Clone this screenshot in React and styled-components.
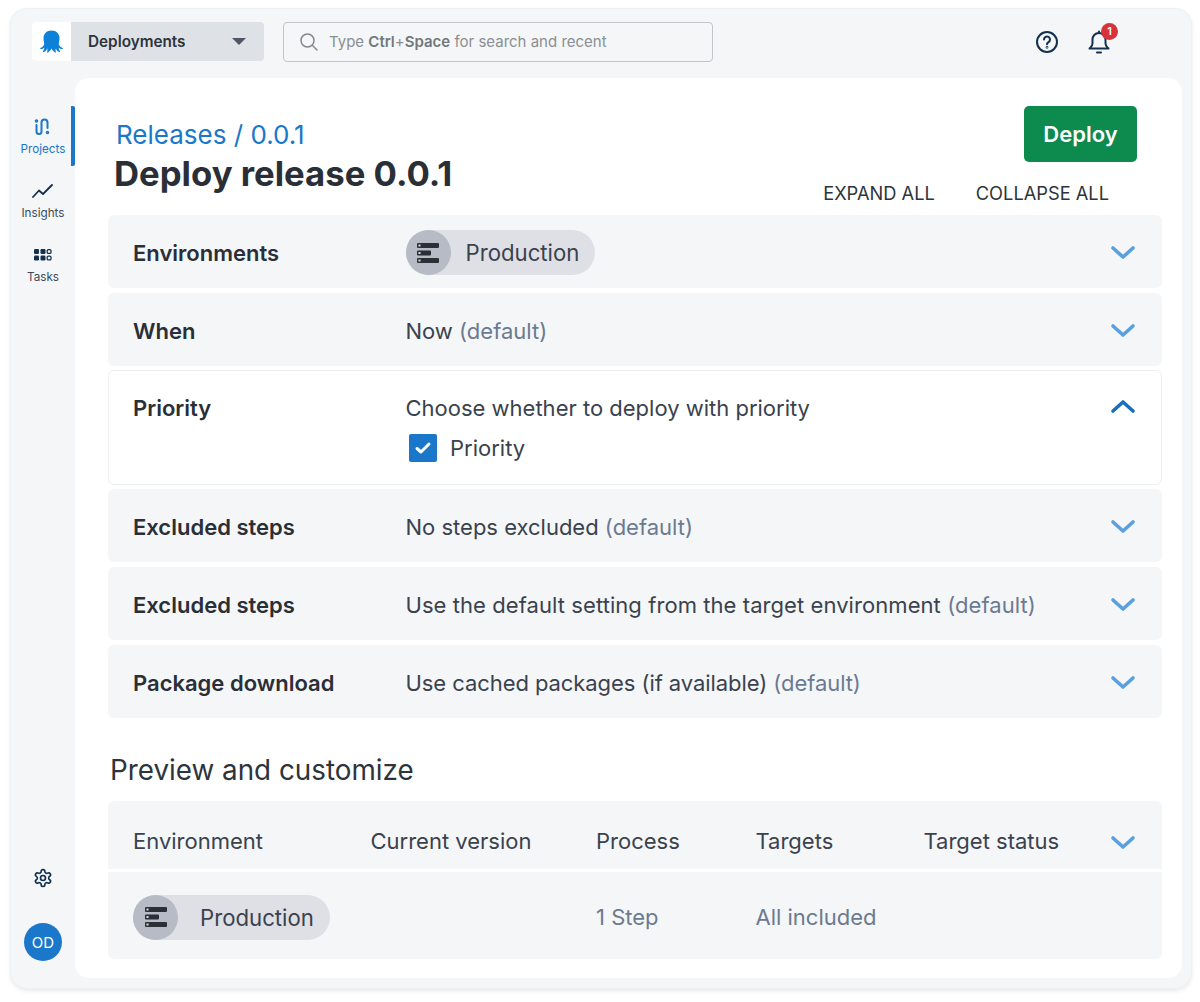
import React from "react";
import styled, { createGlobalStyle } from "styled-components";

const Global = createGlobalStyle`
  html, body { margin: 0; padding: 0; background: #ffffff; }
  body { font-family: Inter, "Liberation Sans", sans-serif; color: #2e343c; }
  * { box-sizing: border-box; }
`;

const Stage = styled.div`
  width: 1200px;
  height: 1002px;
  padding: 9px 9px 14px 11px;
`;
const Frame = styled.div`
  width: 1180px;
  height: 979px;
  background: #f4f6f8;
  border-radius: 16px;
  box-shadow: 0 0 0 1px #eef0f2, 0 2px 5px rgba(40, 50, 60, 0.14);
  display: flex;
  flex-direction: column;
  padding-bottom: 10px;
`;
const Topbar = styled.header`
  height: 69px;
  flex: none;
  display: flex;
  align-items: center;
  padding: 0 80px 4px 21px;
`;
const LogoBox = styled.div`
  width: 39px;
  height: 39px;
  background: #ffffff;
  border-radius: 4px 0 0 4px;
  display: flex;
  align-items: center;
  justify-content: center;
`;
const Selector = styled.div`
  width: 193px;
  height: 39px;
  background: #dee1e6;
  border-radius: 0 4px 4px 0;
  display: flex;
  align-items: center;
  justify-content: space-between;
  padding: 0 18px 0 17px;
  font-size: 15.3px;
  font-weight: 600;
  color: #2e343c;
`;
const Caret = styled.span`
  width: 0;
  height: 0;
  border-left: 7px solid transparent;
  border-right: 7px solid transparent;
  border-top: 7px solid #4f5668;
`;
const Search = styled.div`
  width: 430px;
  height: 40px;
  margin-left: 19px;
  border: 1px solid #c2c5c9;
  border-radius: 4px;
  display: flex;
  align-items: center;
  gap: 10px;
  padding: 0 15px;
  font-size: 15px;
  color: #8b8e92;
  b { font-weight: 600; color: #73767a; }
`;
const TopActions = styled.div`
  margin-left: auto;
  display: flex;
  align-items: center;
  gap: 28px;
`;
const IconButton = styled.span`
  position: relative;
  display: flex;
`;
const Badge = styled.span`
  position: absolute;
  top: -6px;
  left: 14px;
  width: 17px;
  height: 17px;
  border-radius: 50%;
  background: #d8333a;
  color: #fff;
  font-size: 11px;
  font-weight: 600;
  display: flex;
  align-items: center;
  justify-content: center;
`;
const Body = styled.div`
  flex: 1;
  display: flex;
  min-height: 0;
  padding-right: 9px;
`;
const Sidebar = styled.nav`
  width: 64px;
  flex: none;
  display: flex;
  flex-direction: column;
  padding-top: 28px;
`;
const NavItem = styled.div`
  height: 60px;
  margin-bottom: 4px;
  display: flex;
  flex-direction: column;
  align-items: center;
  justify-content: center;
  gap: 6px;
  padding: 2px 0 0 4px;
  font-size: 11.7px;
  color: ${(p) => (p.$active ? "#1a77ca" : "#3d4a5c")};
  border-right: 4px solid ${(p) => (p.$active ? "#1a77ca" : "transparent")};
  border-radius: 2px;
`;
const SideBottom = styled.div`
  margin-top: auto;
  display: flex;
  flex-direction: column;
  align-items: center;
  gap: 35px;
  padding-bottom: 17px;
`;
const Avatar = styled.div`
  width: 38px;
  height: 38px;
  border-radius: 50%;
  background: #1a77ca;
  color: #ffffff;
  font-size: 15px;
  display: flex;
  align-items: center;
  justify-content: center;
`;
const Main = styled.main`
  flex: 1;
  background: #ffffff;
  border-radius: 14px;
  padding: 28px 20px 19px 33px;
  display: flex;
  flex-direction: column;
`;
const Head = styled.div`
  height: 109px;
  flex: none;
  display: flex;
  justify-content: space-between;
`;
const Titles = styled.div`
  padding: 13px 0 0 8px;
`;
const Crumb = styled.div`
  font-size: 26px;
  line-height: 32px;
  color: #1a77ca;
`;
const Title = styled.h1`
  margin: 0 0 0 -2px;
  font-size: 34.7px;
  line-height: 44px;
  font-weight: 700;
  color: #2a2f37;
`;
const HeadRight = styled.div`
  display: flex;
  flex-direction: column;
  align-items: flex-end;
`;
const DeployButton = styled.button`
  width: 113px;
  height: 56px;
  margin-right: 25px;
  border: 0;
  border-radius: 5px;
  background: #0d8a4e;
  color: #ffffff;
  font: 600 22px Inter, sans-serif;
`;
const HeadLinks = styled.div`
  display: flex;
  gap: 41px;
  margin: 20px 53px 0 0;
  font-size: 18.25px;
  line-height: 22px;
  color: #2e343c;
`;
const Rows = styled.div`
  display: flex;
  flex-direction: column;
  gap: 5px;
`;
const Row = styled.section`
  height: ${(p) => p.$h || 73}px;
  flex: none;
  margin: ${(p) => (p.$open ? "-1px 0" : "0")};
  background: ${(p) => (p.$open ? "#ffffff" : "#f4f6f8")};
  border: ${(p) => (p.$open ? "1.5px solid #eceef0" : "0")};
  border-radius: 6px;
  display: grid;
  grid-template-columns: 273px 1fr 26px;
  align-items: ${(p) => (p.$open ? "start" : "center")};
  padding: ${(p) => (p.$open ? "22px 25px 0 24px" : "2px 26px 0 25px")};
`;
const RowLabel = styled.div`
  font-size: 22px;
  line-height: 30px;
  font-weight: 600;
  color: #2a2f37;
`;
const RowValue = styled.div`
  font-size: 22px;
  line-height: 30px;
  letter-spacing: ${(p) => p.$track || 0}px;
  color: #3a424d;
  margin-left: -0.5px;
`;
const Muted = styled.span`
  color: #6c7a90;
`;
const Chip = styled.div`
  display: inline-flex;
  justify-self: start;
  align-items: center;
  height: 45px;
  padding-right: 16px;
  border-radius: 23px;
  background: #dee0e5;
  font-size: 22.2px;
  color: #3a424d;
  gap: ${(p) => (p.$wide ? "22px" : "15px")};
`;
const ChipIcon = styled.span`
  width: 45px;
  height: 45px;
  border-radius: 50%;
  background: #b7bbc6;
  display: flex;
  align-items: center;
  justify-content: center;
`;
const CheckLine = styled.div`
  display: flex;
  align-items: center;
  gap: 13px;
  margin: 10px 0 0 3.5px;
`;
const CheckBox = styled.span`
  width: 28px;
  height: 28px;
  border-radius: 2px;
  background: #1a77ca;
  display: flex;
  align-items: center;
  justify-content: center;
`;
const Section = styled.h2`
  margin: 35px 0 14px 2px;
  font-size: 27.8px;
  line-height: 34px;
  font-weight: 400;
  color: #2e343c;
`;
const Table = styled.div`
  background: #f4f6f8;
  border-radius: 6px;
`;
const Cols = styled.div`
  display: grid;
  grid-template-columns: 237.5px 225.5px 159.5px 168px 1fr 26px;
  align-items: center;
  padding: ${(p) => (p.$rule ? "3px" : "12px")} 26px 0 25px;
  height: ${(p) => p.$h}px;
  font-size: 22px;
  color: ${(p) => (p.$muted ? "#6c7a90" : "#3a424d")};
  border-top: ${(p) => (p.$rule ? "3px solid #ffffff" : "0")};
`;
const ChevronSvg = styled.svg`
  margin-top: ${(p) => p.$mt || 0}px;
`;

const Chevron = ({ up, mt }) => (
  <ChevronSvg $mt={mt} width="26" height="16" viewBox="0 0 26 16" fill="none" stroke={up ? "#1a6fbd" : "#5a9fde"} strokeWidth="3.6" strokeLinecap="round" strokeLinejoin="round">
    <path d={up ? "M3 13 L13 4 L23 13" : "M3 3 L13 12 L23 3"} />
  </ChevronSvg>
);
const ServerIcon = () => (
  <svg width="22" height="20" viewBox="0 0 22 20">
    <rect x="0" y="0" width="22" height="5" rx="1" fill="#2b2f36" />
    <rect x="0" y="7.5" width="14" height="5" rx="1" fill="#2b2f36" />
    <rect x="0" y="15" width="22" height="5" rx="1" fill="#2b2f36" />
    <rect x="1.5" y="1.5" width="2" height="2" fill="#d8dbe2" />
    <rect x="1.5" y="9" width="2" height="2" fill="#d8dbe2" />
    <rect x="1.5" y="16.5" width="2" height="2" fill="#d8dbe2" />
  </svg>
);
const Octopus = () => (
  <svg width="25" height="25" viewBox="0 0 25 25" fill="#0d80d8">
    <path d="M12.5 1.5C17.5 1.5 20.5 5 20.5 9.5C20.5 12.5 19.5 14 19.9 15.7C20.3 17.2 22.3 18.1 23.6 19.1C24.1 19.6 23.7 20.2 23 20.1C21.8 20 20.6 19.4 19.7 18.7C19.7 20.2 20.5 21.5 21 22.2C21.3 22.7 20.9 23.2 20.3 23C18.6 22.4 17.4 20.9 16.8 19.4C16.4 20.8 16.5 22 16.9 23C17.1 23.5 16.6 23.9 16.1 23.6C14.6 22.7 13.5 21.2 12.5 19.5C11.5 21.2 10.4 22.7 8.9 23.6C8.4 23.9 7.9 23.5 8.1 23C8.5 22 8.6 20.8 8.2 19.4C7.6 20.9 6.4 22.4 4.7 23C4.1 23.2 3.7 22.7 4 22.2C4.5 21.5 5.3 20.2 5.3 18.7C4.4 19.4 3.2 20 2 20.1C1.3 20.2 .9 19.6 1.4 19.1C2.7 18.1 4.7 17.2 5.1 15.7C5.5 14 4.5 12.5 4.5 9.5C4.5 5 7.5 1.5 12.5 1.5Z" />
  </svg>
);

const rows = [
  { label: "Excluded steps", value: "No steps excluded", track: 0 },
  { label: "Excluded steps", value: "Use the default setting from the target environment", track: 0.07 },
  { label: "Package download", value: "Use cached packages (if available)", track: -0.07 },
];

export default function App() {
  return (
    <Stage>
      <Global />
      <Frame>
        <Topbar>
          <LogoBox><Octopus /></LogoBox>
          <Selector>Deployments<Caret /></Selector>
          <Search>
            <svg width="20" height="20" viewBox="0 0 20 20" fill="none" stroke="#85888c" strokeWidth="1.5" strokeLinecap="round">
              <circle cx="8.5" cy="8.5" r="6.5" />
              <path d="M13.5 13.5 L18 18" />
            </svg>
            <span>Type <b>Ctrl</b>+<b>Space</b> for search and recent</span>
          </Search>
          <TopActions>
            <IconButton>
              <svg width="24" height="24" viewBox="0 0 24 24" fill="none" stroke="#13304f" strokeWidth="2" strokeLinecap="round">
                <circle cx="12" cy="12" r="10" />
                <path d="M9 9.5a3 3 0 1 1 4.5 2.6c-1 .6-1.5 1.2-1.5 2.2" />
                <circle cx="12" cy="17.3" r=".4" />
              </svg>
            </IconButton>
            <IconButton>
              <svg width="24" height="26" viewBox="0 0 24 26" fill="none" stroke="#13304f" strokeWidth="2" strokeLinecap="round" strokeLinejoin="round">
                <path d="M12 4c-4 0-6.5 3-6.5 6.5v4c0 2.5-1.5 3.5-3 5h19c-1.5-1.5-3-2.5-3-5v-4C18.5 7 16 4 12 4z" />
                <path d="M12 2.5V4M10 23.5h4" />
              </svg>
              <Badge>1</Badge>
            </IconButton>
          </TopActions>
        </Topbar>
        <Body>
          <Sidebar>
            <NavItem $active>
              <svg width="18" height="18" viewBox="0 0 18 18" fill="none" stroke="#1a77ca" strokeWidth="2" strokeLinecap="round">
                <path d="M2.5 7v6.5a2.5 2.5 0 0 0 5 0v-9a3 3 0 0 1 6 0V10" />
                <circle cx="2.5" cy="3" r=".8" />
                <circle cx="13.5" cy="14.5" r=".8" />
              </svg>
              Projects
            </NavItem>
            <NavItem>
              <svg width="22" height="18" viewBox="0 0 22 18" fill="none" stroke="#13304f" strokeWidth="1.8" strokeLinecap="round" strokeLinejoin="round">
                <path d="M1 15 L7 8.5 L11 12 L20 3" />
              </svg>
              Insights
            </NavItem>
            <NavItem>
              <svg width="18" height="18" viewBox="0 0 18 18" fill="#13304f">
                <rect x="0" y="3" width="5" height="5" rx="1.2" />
                <rect x="6.5" y="3" width="5" height="5" rx="1.2" />
                <rect x="13.2" y="3.6" width="3.8" height="3.8" rx="1.2" fill="none" stroke="#13304f" strokeWidth="1.3" />
                <rect x="0" y="9.5" width="5" height="5" rx="1.2" />
                <rect x="6.5" y="9.5" width="5" height="5" rx="1.2" />
                <rect x="13.2" y="10.1" width="3.8" height="3.8" rx="1.2" fill="none" stroke="#13304f" strokeWidth="1.3" />
              </svg>
              Tasks
            </NavItem>
            <SideBottom>
              <svg width="20" height="20" viewBox="0 0 24 24" fill="none" stroke="#13304f" strokeWidth="2" strokeLinecap="round" strokeLinejoin="round">
                <path d="M12.22 2h-.44a2 2 0 0 0-2 2v.18a2 2 0 0 1-1 1.73l-.43.25a2 2 0 0 1-2 0l-.15-.08a2 2 0 0 0-2.73.73l-.22.38a2 2 0 0 0 .73 2.73l.15.1a2 2 0 0 1 1 1.72v.51a2 2 0 0 1-1 1.74l-.15.09a2 2 0 0 0-.73 2.73l.22.38a2 2 0 0 0 2.73.73l.15-.08a2 2 0 0 1 2 0l.43.25a2 2 0 0 1 1 1.73V20a2 2 0 0 0 2 2h.44a2 2 0 0 0 2-2v-.18a2 2 0 0 1 1-1.73l.43-.25a2 2 0 0 1 2 0l.15.08a2 2 0 0 0 2.73-.73l.22-.39a2 2 0 0 0-.73-2.73l-.15-.08a2 2 0 0 1-1-1.74v-.5a2 2 0 0 1 1-1.74l.15-.09a2 2 0 0 0 .73-2.73l-.22-.38a2 2 0 0 0-2.73-.73l-.15.08a2 2 0 0 1-2 0l-.43-.25a2 2 0 0 1-1-1.73V4a2 2 0 0 0-2-2z" />
                <circle cx="12" cy="12" r="3" />
              </svg>
              <Avatar>OD</Avatar>
            </SideBottom>
          </Sidebar>
          <Main>
            <Head>
              <Titles>
                <Crumb>Releases / 0.0.1</Crumb>
                <Title>Deploy release 0.0.1</Title>
              </Titles>
              <HeadRight>
                <DeployButton>Deploy</DeployButton>
                <HeadLinks><span>EXPAND ALL</span><span>COLLAPSE ALL</span></HeadLinks>
              </HeadRight>
            </Head>
            <Rows>
              <Row>
                <RowLabel>Environments</RowLabel>
                <RowValue>
                  <Chip><ChipIcon><ServerIcon /></ChipIcon>Production</Chip>
                </RowValue>
                <Chevron />
              </Row>
              <Row>
                <RowLabel>When</RowLabel>
                <RowValue>Now <Muted>(default)</Muted></RowValue>
                <Chevron />
              </Row>
              <Row $open $h={115}>
                <RowLabel>Priority</RowLabel>
                <RowValue>
                  Choose whether to deploy with priority
                  <CheckLine>
                    <CheckBox>
                      <svg width="18" height="14" viewBox="0 0 18 14" fill="none" stroke="#fff" strokeWidth="3" strokeLinecap="round" strokeLinejoin="round">
                        <path d="M3 7.5 L7 11 L15 3" />
                      </svg>
                    </CheckBox>
                    Priority
                  </CheckLine>
                </RowValue>
                <Chevron up mt={5} />
              </Row>
              {rows.map((r, i) => (
                <Row key={i}>
                  <RowLabel>{r.label}</RowLabel>
                  <RowValue $track={r.track}>{r.value} <Muted>(default)</Muted></RowValue>
                  <Chevron />
                </Row>
              ))}
            </Rows>
            <Section>Preview and customize</Section>
            <Table>
              <Cols $h={68}>
                <span>Environment</span>
                <span>Current version</span>
                <span>Process</span>
                <span>Targets</span>
                <span>Target status</span>
                <Chevron mt={4} />
              </Cols>
              <Cols $h={90} $rule $muted>
                <Chip $wide><ChipIcon><ServerIcon /></ChipIcon>Production</Chip>
                <span />
                <span>1 Step</span>
                <span>All included</span>
              </Cols>
            </Table>
          </Main>
        </Body>
      </Frame>
    </Stage>
  );
}
